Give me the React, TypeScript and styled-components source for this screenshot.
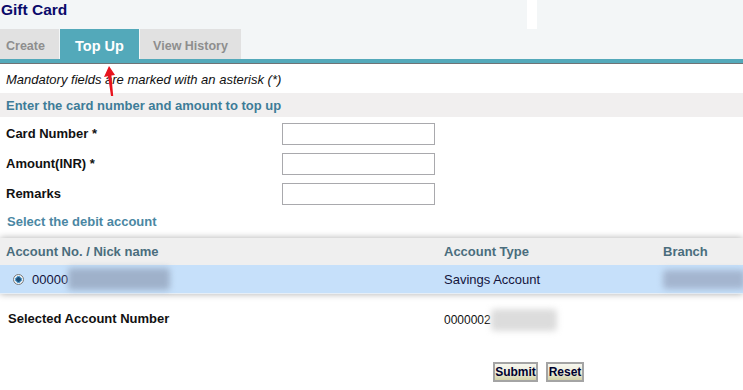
import React from "react";
import styled, { createGlobalStyle } from "styled-components";

const Global = createGlobalStyle`
  html, body { margin: 0; padding: 0; background: #fff; }
  body { font-family: "Liberation Sans", Arial, sans-serif; font-size: 13px; color: #111; width: 743px; overflow: hidden; }
`;

const Page = styled.div`
  position: relative;
  width: 743px;
  height: 390px;
  overflow: hidden;
`;

const Header = styled.div`
  background: #f3f6f7;
`;

const TitleRow = styled.div`
  display: flex;
  height: 29px;
`;

const Title = styled.h1`
  flex: 0 0 527px;
  margin: 0;
  padding: 0 0 0 1px;
  box-sizing: border-box;
  font-size: 15.5px;
  font-weight: bold;
  color: #0a0a6a;
  line-height: 19px;
`;

const WhiteGap = styled.div`
  flex: 0 0 10px;
  background: #fff;
`;

const Tabs = styled.div`
  display: flex;
  height: 30px;
`;

const Tab = styled.div<{ $active?: boolean; $w: number; $shift?: number }>`
  width: ${(p) => p.$w}px;
  margin-right: 1px;
  display: flex;
  align-items: center;
  justify-content: center;
  padding: 3px ${(p) => (p.$shift ? p.$shift : 0)}px 0 0;
  box-sizing: border-box;
  background: ${(p) => (p.$active ? "#53a9ba" : "#e1e1e1")};
  color: ${(p) => (p.$active ? "#fff" : "#8e8e8e")};
  font-weight: bold;
  font-size: ${(p) => (p.$active ? "14.5px" : "12.5px")};
`;

const TealBar = styled.div`
  height: 4px;
  background: #53a9ba;
  border-bottom: 1px solid #6f7376;
`;

const Note = styled.div`
  height: 29px;
  display: flex;
  align-items: center;
  padding: 2px 0 0 6px;
  box-sizing: border-box;
  font-style: italic;
  font-size: 13px;
  color: #111;
`;

const SectionBar = styled.div`
  height: 24px;
  display: flex;
  align-items: center;
  padding: 1px 0 0 6px;
  box-sizing: border-box;
  background: #f1efef;
  color: #3e7c98;
  font-weight: bold;
  font-size: 13px;
`;

const FormRow = styled.div`
  display: grid;
  grid-template-columns: 282px 153px;
  align-items: center;
  height: 30px;
  padding-top: 4px;
  box-sizing: border-box;
`;

const Label = styled.label`
  padding-left: 6px;
  font-weight: bold;
  font-size: 13px;
  color: #111;
  margin-top: -1px;
`;

const Input = styled.input`
  width: 153px;
  height: 22px;
  box-sizing: border-box;
  border: 1px solid #a9a9ad;
  margin: 0;
  padding: 0 3px;
  background: #fff;
`;

const SubHead = styled.div`
  height: 26px;
  display: flex;
  align-items: center;
  padding: 2px 0 0 7px;
  box-sizing: border-box;
  color: #4a87a3;
  font-weight: bold;
  font-size: 13px;
`;

const Table = styled.div`
  margin-top: 5px;
  box-shadow: 0 0 7px rgba(0, 0, 0, 0.32);
`;

const Row = styled.div<{ $head?: boolean }>`
  display: grid;
  grid-template-columns: 438px 219px 1fr;
  align-items: center;
  height: ${(p) => (p.$head ? "27px" : "28px")};
  background: ${(p) => (p.$head ? "#efefef" : "#c6e0fa")};
  color: ${(p) => (p.$head ? "#4a6d7d" : "#14143c")};
  font-weight: ${(p) => (p.$head ? "bold" : "normal")};
  font-size: 13px;
  ${(p) => (p.$head ? "" : "border-bottom: 1px solid #e6eef6;")}
`;

const Cell = styled.div`
  padding-left: 6px;
  display: flex;
  align-items: center;
  height: 100%;
`;

const Radio = styled.span`
  width: 11px;
  height: 11px;
  border-radius: 50%;
  box-sizing: border-box;
  border: 1px solid #7c7c7c;
  background: radial-gradient(circle, #1d4f78 0 2px, #5aa0cf 2.6px 3.2px, #eef2f5 3.6px);
  margin: 0 8px 0 7px;
`;

const Blur = styled.span<{ $c: string; $w: number; $h: number }>`
  display: inline-block;
  width: ${(p) => p.$w}px;
  height: ${(p) => p.$h}px;
  background: ${(p) => p.$c};
  filter: blur(3px);
  border-radius: 4px;
`;

const Selected = styled.div`
  display: grid;
  grid-template-columns: 444px 1fr;
  align-items: center;
  height: 44px;
  margin-top: 2px;
`;

const SelLabel = styled.div`
  padding-left: 8px;
  font-weight: bold;
  font-size: 13px;
  color: #111;
`;

const SelValue = styled.div`
  display: flex;
  align-items: center;
  font-size: 12px;
  color: #111;
  padding-top: 3px;
`;

const Buttons = styled.div`
  display: flex;
  gap: 8px;
  padding: 22px 0 0 493px;
`;

const Button = styled.button<{ $w: number }>`
  width: ${(p) => p.$w}px;
  height: 20px;
  padding: 0;
  border: 2px solid #a4a4a4;
  background: linear-gradient(#f7f7ef, #ecebd9 55%, #d4d3a8);
  font-family: "Liberation Sans", Arial, sans-serif;
  font-weight: bold;
  font-size: 12px;
  color: #00002e;
`;

const Arrow = styled.svg`
  position: absolute;
  left: 102px;
  top: 64px;
`;

export default function App() {
  return (
    <Page>
      <Global />
      <Header>
        <TitleRow>
          <Title>Gift Card</Title>
          <WhiteGap />
        </TitleRow>
        <Tabs>
          <Tab $w={59} $shift={8}>Create</Tab>
          <Tab $w={79} $active>Top Up</Tab>
          <Tab $w={101}>View History</Tab>
        </Tabs>
      </Header>
      <TealBar />
      <Note>Mandatory fields are marked with an asterisk (*)</Note>
      <SectionBar>Enter the card number and amount to top up</SectionBar>
      <FormRow>
        <Label>Card Number *</Label>
        <Input />
      </FormRow>
      <FormRow>
        <Label>Amount(INR) *</Label>
        <Input />
      </FormRow>
      <FormRow>
        <Label>Remarks</Label>
        <Input />
      </FormRow>
      <SubHead>Select the debit account</SubHead>
      <Table>
        <Row $head>
          <Cell>Account No. / Nick name</Cell>
          <Cell>Account Type</Cell>
          <Cell>Branch</Cell>
        </Row>
        <Row>
          <Cell>
            <Radio />
            <span>00000</span>
            <Blur $c="#9fb1ca" $w={102} $h={22} />
          </Cell>
          <Cell>Savings Account</Cell>
          <Cell>
            <Blur $c="#a4b5cf" $w={82} $h={19} />
          </Cell>
        </Row>
      </Table>
      <Selected>
        <SelLabel>Selected Account Number</SelLabel>
        <SelValue>
          <span>0000002</span>
          <Blur $c="#dcdcdc" $w={66} $h={22} />
        </SelValue>
      </Selected>
      <Buttons>
        <Button $w={45}>Submit</Button>
        <Button $w={38}>Reset</Button>
      </Buttons>
      <Arrow width="16" height="34" viewBox="0 0 16 34">
        <path d="M7 2 L2 13 L6 12.2 L9 32 L11.2 32 L9.4 11.6 L13 11 Z" fill="#e8141e" />
      </Arrow>
    </Page>
  );
}
